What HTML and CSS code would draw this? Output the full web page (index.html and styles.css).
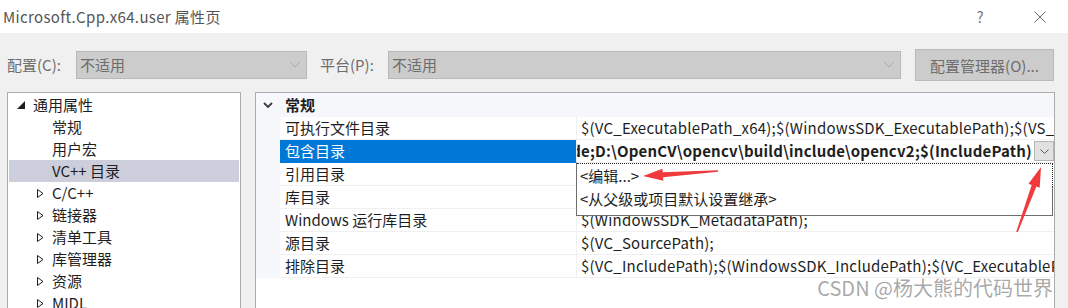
FILE: index.html
```html
<!DOCTYPE html>
<html lang="zh-CN">
<head>
<meta charset="utf-8">
<title>Microsoft.Cpp.x64.user 属性页</title>
<link rel="stylesheet" href="styles.css">
</head>
<body>
<div class="window">
  <div class="titlebar">
    <span class="title">Microsoft.Cpp.x64.user 属性页</span>
    <span class="tb-btn help">?</span>
    <span class="tb-btn close"><svg width="12" height="12" viewBox="0 0 12 12"><path d="M0.5 0.5 L11.5 11.5 M11.5 0.5 L0.5 11.5" stroke="#6f6f6f" stroke-width="1" fill="none"/></svg></span>
  </div>
  <div class="main">
    <div class="toolbar">
      <span class="lbl lbl1">配置(C):</span>
      <div class="combo c1"><span>不适用</span><svg class="chev" width="10" height="6" viewBox="0 0 10 6"><path d="M0.5 0.5 L5 5 L9.5 0.5" stroke="#a9a9a9" fill="none"/></svg></div>
      <span class="lbl lbl2">平台(P):</span>
      <div class="combo c2"><span>不适用</span><svg class="chev" width="10" height="6" viewBox="0 0 10 6"><path d="M0.5 0.5 L5 5 L9.5 0.5" stroke="#a9a9a9" fill="none"/></svg></div>
      <button class="btn">配置管理器(O)...</button>
    </div>
    <div class="panes">
      <div class="tree">
        <div class="trow top"><svg class="tri" width="8" height="8" viewBox="0 0 8 8"><polygon points="8,0 8,8 0,8" fill="#1e1e1e"/></svg><span>通用属性</span></div>
        <div class="trow child"><span>常规</span></div>
        <div class="trow child"><span>用户宏</span></div>
        <div class="trow child sel"><span>VC++ 目录</span></div>
        <div class="trow coll"><svg class="tri2" width="7" height="9" viewBox="0 0 7 9"><polygon points="0.5,0.5 6,4.5 0.5,8.5" fill="none" stroke="#1e1e1e"/></svg><span>C/C++</span></div>
        <div class="trow coll"><svg class="tri2" width="7" height="9" viewBox="0 0 7 9"><polygon points="0.5,0.5 6,4.5 0.5,8.5" fill="none" stroke="#1e1e1e"/></svg><span>链接器</span></div>
        <div class="trow coll"><svg class="tri2" width="7" height="9" viewBox="0 0 7 9"><polygon points="0.5,0.5 6,4.5 0.5,8.5" fill="none" stroke="#1e1e1e"/></svg><span>清单工具</span></div>
        <div class="trow coll"><svg class="tri2" width="7" height="9" viewBox="0 0 7 9"><polygon points="0.5,0.5 6,4.5 0.5,8.5" fill="none" stroke="#1e1e1e"/></svg><span>库管理器</span></div>
        <div class="trow coll"><svg class="tri2" width="7" height="9" viewBox="0 0 7 9"><polygon points="0.5,0.5 6,4.5 0.5,8.5" fill="none" stroke="#1e1e1e"/></svg><span>资源</span></div>
        <div class="trow coll"><svg class="tri2" width="7" height="9" viewBox="0 0 7 9"><polygon points="0.5,0.5 6,4.5 0.5,8.5" fill="none" stroke="#1e1e1e"/></svg><span>MIDL</span></div>
      </div>
      <div class="grid">
        <div class="cat">
          <div class="gut catgut"><svg width="10" height="7" viewBox="0 0 10 7"><path d="M1 1 L5 5 L9 1" stroke="#3c3c3c" stroke-width="1.8" fill="none"/></svg></div>
          <span class="catname">常规</span>
        </div>
        <div class="prow"><div class="gut"></div><div class="name">可执行文件目录</div><div class="val">$(VC_ExecutablePath_x64);$(WindowsSDK_ExecutablePath);$(VS_ExecutablePath);$(MSBuild_ExecutablePath);$(FxCopDir);$(PATH);</div></div>
        <div class="prow selrow"><div class="gut"></div><div class="name selname">包含目录</div><div class="val selval"><span class="boldtxt">$(VC_IncludePath);$(WindowsSDK_IncludePath);D:\OpenCV\opencv\build\include;D:\OpenCV\opencv\build\include\opencv2;$(IncludePath)</span><span class="ddbtn"><svg width="9" height="5" viewBox="0 0 9 5"><path d="M0.5 0.5 L4.5 4.5 L8.5 0.5" stroke="#5a5a5a" fill="none"/></svg></span></div></div>
        <div class="prow"><div class="gut"></div><div class="name">引用目录</div><div class="val">$(VC_ReferencesPath_x64);</div></div>
        <div class="prow"><div class="gut"></div><div class="name">库目录</div><div class="val">$(VC_LibraryPath_x64);$(WindowsSDK_LibraryPath_x64);</div></div>
        <div class="prow"><div class="gut"></div><div class="name">Windows 运行库目录</div><div class="val">$(WindowsSDK_MetadataPath);</div></div>
        <div class="prow"><div class="gut"></div><div class="name">源目录</div><div class="val">$(VC_SourcePath);</div></div>
        <div class="prow"><div class="gut"></div><div class="name">排除目录</div><div class="val">$(VC_IncludePath);$(WindowsSDK_IncludePath);$(VC_ExecutablePath_x64);$(VC_LibraryPath_x64);</div></div>
        <div class="popup">
          <div class="pitem focus">&lt;编辑...&gt;</div>
          <div class="pitem">&lt;从父级或项目默认设置继承&gt;</div>
        </div>
      </div>
    </div>
  </div>
  <svg class="arrows" width="1068" height="308" viewBox="0 0 1068 308">
    <polygon fill="#f03a3c" points="643,176 663.3,180.7 663.1,177.2 718.05,171.8 717.95,170.2 662.7,172.2 662.5,168.7"/>
    <polygon fill="#f03a3c" points="1041,167 1039.7,187.8 1036.4,186.6 1017.75,232.28 1016.25,231.72 1031.7,184.9 1028.5,183.7"/>
  </svg>
  <div class="watermark">CSDN @杨大熊的代码世界</div>
</div>
</body>
</html>
```

FILE: styles.css
```css
html, body {
  margin: 0;
  padding: 0;
  width: 1068px;
  height: 308px;
  overflow: hidden;
}
body {
  font-family: "Noto Sans CJK SC", sans-serif;
  font-size: 15px;
  color: #1e1e1e;
  background: #f0f0f0;
}
.window {
  position: relative;
  width: 1068px;
  height: 308px;
  overflow: hidden;
}
.titlebar {
  height: 33px;
  background: #ffffff;
  display: flex;
  align-items: center;
  padding-left: 3px;
}
.title {
  flex: 1;
  color: #555555;
  font-size: 15px;
  line-height: 20px;
  letter-spacing: 0.35px;
}
.tb-btn {
  width: 46px;
  height: 33px;
  display: flex;
  align-items: center;
  justify-content: center;
  color: #7a7a7a;
}
.help { margin-right: 14px; font-size: 15px; }
.close { margin-right: 5px; }

.main {
  padding: 16px 0 0 7px;
}
.toolbar {
  display: flex;
  align-items: center;
  height: 32px;
}
.lbl {
  color: #6d6d6d;
  line-height: 20px;
}
.lbl1 { width: 69px; }
.lbl2 { width: 68px; margin-left: 13px; }
.combo {
  box-sizing: border-box;
  height: 28px;
  border: 1px solid #b9b9b9;
  background: #cccccc;
  display: flex;
  align-items: center;
  justify-content: space-between;
  padding: 0 6px 0 3px;
  color: #6d6d6d;
  line-height: 20px;
}
.c1 { width: 231px; }
.c2 { width: 513px; }
.btn {
  margin-left: 14px;
  box-sizing: border-box;
  width: 139px;
  height: 32px;
  border: 1px solid #b9b9b9;
  background: #cccccc;
  color: #6d6d6d;
  font: inherit;
  padding: 0;
}

.panes {
  display: flex;
  gap: 14px;
  margin-top: 11px;
  height: 240px;
}
.tree {
  box-sizing: border-box;
  width: 234px;
  border: 1px solid #acacac;
  background: #ffffff;
  padding: 1px 1px 0 1px;
}
.trow {
  height: 22px;
  display: flex;
  align-items: center;
  line-height: 20px;
}
.trow.top { padding-left: 8px; }
.trow.top .tri { margin-right: 8px; }
.trow.child { padding-left: 43px; }
.trow.coll { padding-left: 28px; }
.trow.coll .tri2 { margin-right: 8px; }
.trow.sel { background: #cccedb; }

.grid {
  position: relative;
  box-sizing: border-box;
  width: 800px;
  border: 1px solid #acacac;
  background: #ffffff;
}
.cat {
  display: flex;
  align-items: center;
  height: 24px;
  background: #f5f7fb;
}
.catgut {
  align-self: stretch;
  display: flex;
  align-items: center;
  justify-content: center;
}
.catname {
  padding-left: 5px;
  font-weight: bold;
  line-height: 20px;
}
.gut {
  width: 24px;
  flex-shrink: 0;
  background: #f5f7fb;
}
.prow {
  display: flex;
  height: 23px;
  line-height: 20px;
}
.name {
  box-sizing: border-box;
  width: 297px;
  flex-shrink: 0;
  padding-left: 5px;
  border-bottom: 1px solid #f0f0f0;
  border-right: 1px solid #f0f0f0;
  display: flex;
  align-items: center;
  white-space: nowrap;
}
.val {
  flex: 1;
  min-width: 0;
  box-sizing: border-box;
  padding-left: 4px;
  border-bottom: 1px solid #f0f0f0;
  display: flex;
  align-items: center;
  white-space: nowrap;
  overflow: hidden;
  letter-spacing: 0.22px;
}
.selname {
  background: #0078d7;
  color: #ffffff;
  border-bottom-color: #0078d7;
}
.selval {
  justify-content: flex-end;
  padding-left: 0;
}
.boldtxt {
  flex-shrink: 0;
  font-weight: bold;
  margin-right: 2px;
  letter-spacing: 0.2px;
}
.ddbtn {
  flex-shrink: 0;
  box-sizing: border-box;
  width: 20px;
  height: 20px;
  background: #e1e1e1;
  border: 1px solid #b4b4b4;
  display: flex;
  align-items: center;
  justify-content: center;
}
.popup {
  position: absolute;
  left: 320px;
  top: 70px;
  box-sizing: border-box;
  width: 477px;
  height: 53px;
  background: #ffffff;
  border: 1px solid #6e6e6e;
  border-top: none;
}
.pitem {
  height: 23px;
  line-height: 23px;
  padding-left: 3px;
  white-space: nowrap;
}
.pitem.focus {
  border-top: 1px dotted #2a2a2a;
  border-right: 1px dotted #2a2a2a;
  margin-right: -1px;
  background: #ffffff;
}
.arrows {
  position: absolute;
  left: 0;
  top: 0;
  pointer-events: none;
}
.watermark {
  position: absolute;
  right: 15px;
  top: 274px;
  font-size: 20px;
  line-height: 28px;
  color: rgba(140, 140, 140, 0.75);
  white-space: nowrap;
}
```
